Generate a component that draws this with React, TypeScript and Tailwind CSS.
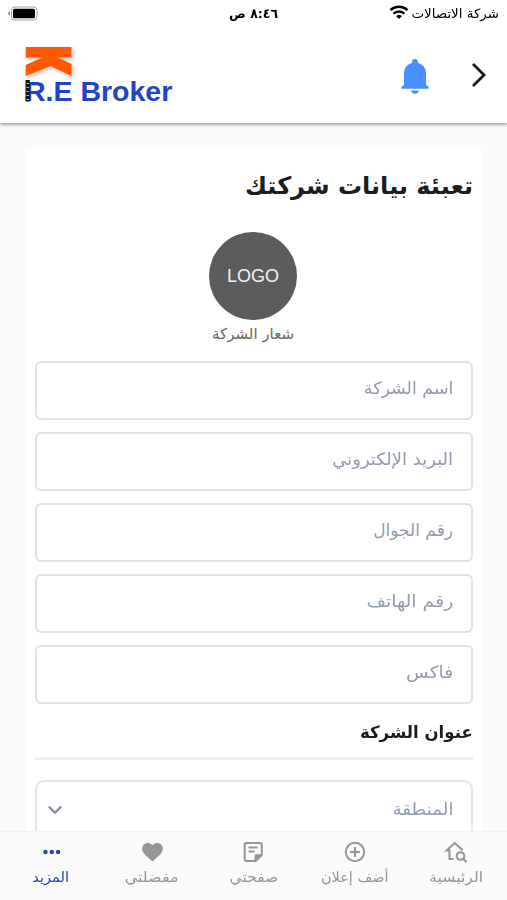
import type { ReactNode } from "react";
import { ChevronDown } from "lucide-react";

type Field = {
  label: string;
  stretch: string;
};

const fields: Field[] = [
  { label: "اسم الشركة", stretch: "scale-x-[1.025]" },
  { label: "البريد الإلكتروني", stretch: "scale-x-[1.06]" },
  { label: "رقم الجوال", stretch: "scale-x-100" },
  { label: "رقم الهاتف", stretch: "scale-x-[1.11]" },
  { label: "فاكس", stretch: "scale-x-[1.09]" },
];

function StatusBar() {
  return (
    <div className="relative z-10 grid h-[27px] shrink-0 grid-cols-3 items-center bg-white pl-2 pr-[8px] text-[13px] text-black">
      <div className="flex items-center gap-[5px] whitespace-nowrap">
        <span className="inline-block origin-right scale-x-[1.03]">شركة الاتصالات</span>
        <svg className="mb-[2px]" width="20" height="15" viewBox="0 0 20 15" fill="none" stroke="#000" strokeWidth="2.5">
          <path d="M1.500 5.200a12.300 12.300 0 0 1 17 0" />
          <path d="M4.500 8.700a8 8 0 0 1 11 0" />
          <path d="M7.200 11.200a4 4 0 0 1 5.600 0L10 14z" fill="#000" stroke="none" />
        </svg>
      </div>
      <div className="text-center font-bold">
        <span className="inline-block scale-x-[0.96]">٨:٤٦ ص</span>
      </div>
      <div className="flex justify-end">
        <svg width="30" height="15" viewBox="0 0 30 15">
          <path d="M2 5.500v4a2 2 0 0 1 0-4z" fill="#999" />
          <rect x="3.500" y="1" width="25.500" height="13" rx="3.500" fill="#fff" stroke="#a3a3a3" />
          <rect x="5" y="2.800" width="22" height="9.400" rx="1.500" fill="#000" />
        </svg>
      </div>
    </div>
  );
}

function Logo() {
  return (
    <div dir="ltr" className="flex w-[150px] flex-col">
      <svg width="52" height="32" viewBox="0 0 52 32" className="drop-shadow-[2px_2px_2px_rgba(0,0,0,0.25)]">
        <path d="M.7 0h45.800v10.500H32.500L46.500 17v12L25.500 19 .7 29V18l16.800-7.500H.7z" fill="#ff5a00" />
      </svg>
      <div className="relative -mt-[3px] whitespace-nowrap font-['Liberation_Sans',sans-serif] text-[28.500px] font-bold leading-[30px] text-[#2144c4]">
        R.E Broker
        <svg className="absolute left-0 top-[4px]" width="6" height="22" viewBox="0 0 6 22">
          <path d="M.5 0h4.300v21.500H.5z" fill="#111" />
          <path d="M1.500 3.500h2.500M1.500 7.500h2.500M1.500 11.500h2.500M1.500 15.500h2.500M1.500 19.500h2.500" stroke="#bbb" strokeWidth="1" />
        </svg>
      </div>
    </div>
  );
}

function Header() {
  return (
    <header className="relative flex h-[96px] shrink-0 items-start justify-between bg-white pl-[25px] pr-[20px] shadow-[0_1px_4px_rgba(0,0,0,0.5)]">
      <div className="flex items-center gap-[42px] pt-[32px]">
        <svg className="mb-[5px]" width="16" height="26" viewBox="0 0 16 26" fill="none" stroke="#171717" strokeWidth="2.800">
          <path d="M2 2l11 11L2 24" />
        </svg>
        <svg width="28" height="36" viewBox="0 0 28 36" fill="#4a8fff">
          <path d="M14 0c1.800 0 3 1.200 3 3v1c5 1.300 8 5.300 8 10.500V26l2.300 1.500c.8.600.7 2.300-.5 2.300H1.200C0 29.800-.1 28.100.7 27.500L3 26V14.500C3 9.300 6 5.300 11 4V3c0-1.800 1.200-3 3-3z" />
          <path d="M10 31.500h8c-.3 2-1.900 3.300-4 3.300s-3.700-1.300-4-3.300z" />
        </svg>
      </div>
      <div className="pt-[20px]">
        <Logo />
      </div>
    </header>
  );
}

function HomeSearchIcon() {
  return (
    <svg width="24" height="24" viewBox="0 0 24 24" fill="none" stroke="currentColor" strokeWidth="2">
      <path d="M9.500 19H5.500v-8.500H2.600L10.700 3l8 7.300" />
      <circle cx="16.500" cy="16" r="3.800" />
      <path d="M19.200 18.700l3.300 3.300" strokeWidth="2.200" />
    </svg>
  );
}

function PlusCircleIcon() {
  return (
    <svg width="24" height="24" viewBox="0 0 24 24" fill="none" stroke="currentColor" strokeWidth="2">
      <circle cx="12" cy="12" r="9.200" />
      <path d="M12 7v10M7 12h10" />
    </svg>
  );
}

function NoteIcon() {
  return (
    <svg width="24" height="24" viewBox="0 0 24 24" fill="none" stroke="currentColor" strokeWidth="2">
      <path d="M5.500 2.900h13.500a1.800 1.800 0 0 1 1.800 1.800v10.300l-6.100 6.100H5.500a1.800 1.800 0 0 1-1.800-1.800V4.700a1.800 1.800 0 0 1 1.800-1.800z" />
      <path d="M7.500 7.500h9M7.500 11.500h6" />
      <path d="M13.500 21.500v-5.700a1.500 1.500 0 0 1 1.500-1.500h6z" fill="currentColor" stroke="none" />
    </svg>
  );
}

function HeartIcon() {
  return (
    <svg width="24" height="24" viewBox="0 0 24 24" fill="currentColor">
      <path d="M12.500 21.500l-1.500-1.300C5.500 15.300 2.200 12.500 2.200 8.500c0-3.200 2.500-5.500 5.500-5.500 1.900 0 3.600.8 4.800 2.300C13.700 3.800 15.400 3 17.300 3c3 0 5.500 2.300 5.500 5.500 0 4-3.300 6.800-8.800 11.700z" />
    </svg>
  );
}

function DotsIcon() {
  return (
    <svg width="24" height="24" viewBox="0 0 24 24" fill="currentColor">
      <circle cx="6.500" cy="12" r="2.200" />
      <circle cx="12.800" cy="12" r="2.200" />
      <circle cx="19.100" cy="12" r="2.200" />
    </svg>
  );
}

type NavItemProps = {
  label: string;
  icon: ReactNode;
  active?: boolean;
  stretch?: string;
};

function NavItem({ label, icon, active, stretch = "scale-x-100" }: NavItemProps) {
  return (
    <a className={`flex flex-1 flex-col items-center pt-[8px] ${active ? "text-[#2144bb]" : "text-[#969696]"}`}>
      {icon}
      <span className={`mt-[3px] whitespace-nowrap text-[14px] leading-[20px] ${stretch}`}>{label}</span>
    </a>
  );
}

export default function App() {
  return (
    <div
      dir="rtl"
      className="flex h-[900px] w-[507px] flex-col overflow-hidden bg-white font-['DejaVu_Sans',sans-serif]"
    >
      <StatusBar />
      <Header />

      <main className="min-h-0 flex-1 overflow-hidden bg-[#fafafa] pl-[26px] pr-[25px] pt-[25px]">
        <div className="h-[800px] bg-white px-[9px] pt-[20px]">
          <h1 className="h-[36px] text-[24px] font-bold leading-[36px] text-[#1d1d1f]">
            <span className="inline-block origin-right whitespace-nowrap">تعبئة بيانات شركتك</span>
          </h1>

          <div className="mr-[2px] mt-[28px] flex flex-col items-center">
            <div className="flex size-[88px] items-center justify-center rounded-full bg-[#5c5c5c] font-['Liberation_Sans',sans-serif] text-[18px] text-[#f2f2f2]">
              LOGO
            </div>
            <span className="mt-[3px] whitespace-nowrap text-[15px] leading-[22px] text-[#666]">شعار الشركة</span>
          </div>

          <div className="mt-[16px] flex flex-col gap-[12px]">
            {fields.map((field) => (
              <div
                key={field.label}
                className="flex h-[59px] items-center rounded-[6px] border-2 border-[#e2e2e2] px-[18px] pb-[3px] text-[17px] text-[#929bb0]"
              >
                <span className={`origin-right whitespace-nowrap ${field.stretch}`}>{field.label}</span>
              </div>
            ))}
          </div>

          <h2 className="mt-[14px] h-[28px] text-[17px] font-bold leading-[28px] text-[#1d1d1f]">
            <span className="inline-block origin-right scale-x-[0.975] whitespace-nowrap">عنوان الشركة</span>
          </h2>
          <div className="mt-[11px] h-[3px] bg-[#f0f0f0]" />

          <div className="mt-[20px] flex h-[62px] items-center justify-between rounded-[9px] border-2 border-[#e5e5e5] pl-[7px] pr-[17px] pb-[3px] text-[17px] text-[#929bb0]">
            <span className="origin-right scale-x-[1.08] whitespace-nowrap">المنطقة</span>
            <ChevronDown size={22} strokeWidth={2.4} color="#8189a0" />
          </div>
        </div>
      </main>

      <nav className="flex h-[69px] shrink-0 border-t border-[#f3f3f3] bg-[#fafafa]">
        <NavItem label="الرئيسية" icon={<HomeSearchIcon />} stretch="scale-x-[1.12]" />
        <NavItem label="أضف إعلان" icon={<PlusCircleIcon />} stretch="scale-x-[1.03]" />
        <NavItem label="صفحتي" icon={<NoteIcon />} stretch="scale-x-[1.11]" />
        <NavItem label="مفضلتي" icon={<HeartIcon />} stretch="scale-x-[1.14]" />
        <NavItem label="المزيد" icon={<DotsIcon />} stretch="scale-x-[1.04]" active />
      </nav>
    </div>
  );
}
